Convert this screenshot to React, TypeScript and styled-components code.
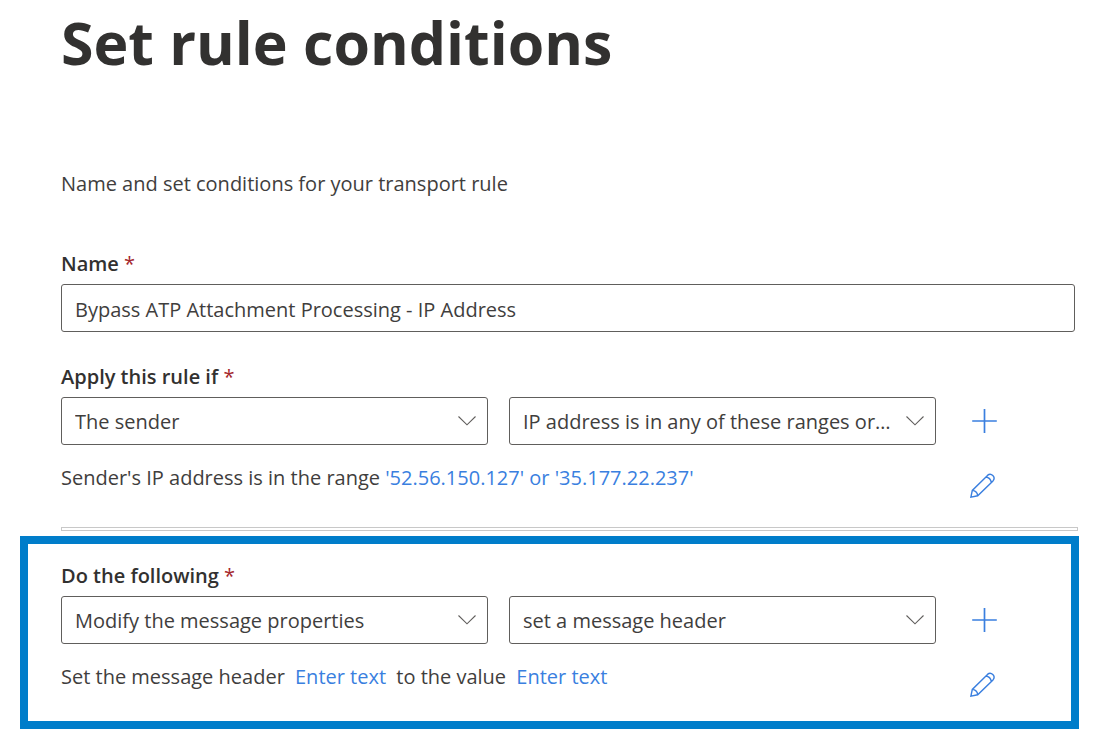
import React from "react";
import styled, { createGlobalStyle } from "styled-components";

const ink = "#323130";
const text = "#3f3e3d";
const link = "#3a7fdf";

const GlobalStyle = createGlobalStyle`
  *, *::before, *::after { box-sizing: border-box; }
  body {
    margin: 0;
    background: #ffffff;
    color: ${text};
    font-family: "Open Sans", "Noto Sans", sans-serif;
    font-size: 20px;
    line-height: 28px;
  }
`;

const Page = styled.main`
  padding: 2px 40px 12px 20px;
`;

const Block = styled.section<{ $end?: number }>`
  padding: 0 ${(p) => p.$end ?? 4}px 0 41px;
`;

const Title = styled.h1`
  margin: 0;
  color: ${ink};
  font-size: 59px;
  line-height: 80px;
  font-weight: 700;
`;

const Intro = styled.p`
  margin: 88px 0 52px;
`;

const Label = styled.label`
  display: block;
  margin-bottom: 6px;
  color: ${ink};
  font-weight: 600;
`;

const Required = styled.span`
  color: #a4262c;
  font-weight: 400;
`;

const TextBox = styled.input`
  display: block;
  width: 100%;
  height: 48px;
  margin-bottom: 31px;
  padding: 2px 13px 0;
  border: 1px solid #605e5c;
  border-radius: 3px;
  background: #ffffff;
  color: ${text};
  font: inherit;
`;

const Rule = styled.hr`
  height: 4px;
  margin: 27px 1px 5px 41px;
  border: 1px solid #c8c8c8;
`;

const Highlight = styled.section`
  padding: 18px 0 22px 33px;
  border: 8px solid #007dca;
`;

const Row = styled.div`
  display: grid;
  grid-template-columns: 1fr 1fr 114px;
  column-gap: 21px;
  align-items: center;
`;

const SelectWrap = styled.div`
  position: relative;
  min-width: 0;
`;

const Select = styled.select`
  display: block;
  width: 100%;
  height: 48px;
  padding: 2px 44px 0 13px;
  appearance: none;
  border: 1px solid #605e5c;
  border-radius: 3px;
  background: #ffffff;
  color: ${text};
  font: inherit;
  white-space: nowrap;
  overflow: hidden;
  text-overflow: ellipsis;
`;

const Chevron = styled.svg`
  position: absolute;
  top: 18px;
  right: 11px;
  pointer-events: none;
`;

const IconButton = styled.button`
  display: flex;
  justify-content: center;
  width: 54px;
  padding: 0;
  border: 0;
  background: none;
  color: ${link};
  cursor: pointer;
`;

const Summary = styled(Row)`
  margin-top: 19px;
  align-items: start;
`;

const SummaryText = styled.p`
  grid-column: span 2;
  margin: 0;
`;

const EditButton = styled(IconButton)`
  margin-top: 8px;
`;

const Link = styled.a<{ $spaced?: boolean }>`
  margin: 0 ${(p) => (p.$spaced ? 5 : 0)}px;
  color: ${link};
  text-decoration: none;
`;

function Picker({ id, label, value }: { id?: string; label?: string; value: string }) {
  return (
    <SelectWrap>
      <Select id={id} aria-label={label} defaultValue={value}>
        <option>{value}</option>
      </Select>
      <Chevron width="20" height="12" viewBox="0 0 20 12" fill="none" stroke="#605e5c" strokeWidth="1.1">
        <path d="M1.5 1.5 10 9.8 18.5 1.5" />
      </Chevron>
    </SelectWrap>
  );
}

function AddButton({ label }: { label: string }) {
  return (
    <IconButton type="button" aria-label={label}>
      <svg width="28" height="28" viewBox="0 0 28 28" fill="none" stroke="currentColor" strokeWidth="1.7">
        <path d="M2.2 14h24.6M14.5 2v24" />
      </svg>
    </IconButton>
  );
}

function PencilButton({ label }: { label: string }) {
  return (
    <EditButton type="button" aria-label={label}>
      <svg width="28" height="28" viewBox="0 0 28 28" fill="none" stroke="currentColor" strokeWidth="1.4">
        <path d="M.9 25.1 2.3 18.4 17.5 3.4a3.9 3.9 0 0 1 5.5 5.5L7.7 23.8ZM2.3 18.4c2.9.3 5.1 2.5 5.4 5.4M15.9 5c2.8.4 4.9 2.6 5.5 5.5" />
      </svg>
    </EditButton>
  );
}

export default function App() {
  return (
    <Page>
      <GlobalStyle />
      <Block>
        <Title>Set rule conditions</Title>
        <Intro>Name and set conditions for your transport rule</Intro>
        <Label htmlFor="rule-name">
          Name <Required>*</Required>
        </Label>
        <TextBox id="rule-name" type="text" required defaultValue="Bypass ATP Attachment Processing - IP Address" />
      </Block>
      <Block $end={8}>
        <Label htmlFor="condition">
          Apply this rule if <Required>*</Required>
        </Label>
        <Row>
          <Picker id="condition" value="The sender" />
          <Picker label="Condition detail" value="IP address is in any of these ranges or exactly matches" />
          <AddButton label="Add condition" />
        </Row>
        <Summary>
          <SummaryText>
            Sender's IP address is in the range <Link href="#ranges">'52.56.150.127' or '35.177.22.237'</Link>
          </SummaryText>
          <PencilButton label="Edit condition" />
        </Summary>
      </Block>
      <Rule />
      <Highlight>
        <Label htmlFor="action">
          Do the following <Required>*</Required>
        </Label>
        <Row>
          <Picker id="action" value="Modify the message properties" />
          <Picker label="Action detail" value="set a message header" />
          <AddButton label="Add action" />
        </Row>
        <Summary>
          <SummaryText>
            Set the message header <Link $spaced href="#header">Enter text</Link> to the value{" "}
            <Link $spaced href="#value">Enter text</Link>
          </SummaryText>
          <PencilButton label="Edit action" />
        </Summary>
      </Highlight>
    </Page>
  );
}
